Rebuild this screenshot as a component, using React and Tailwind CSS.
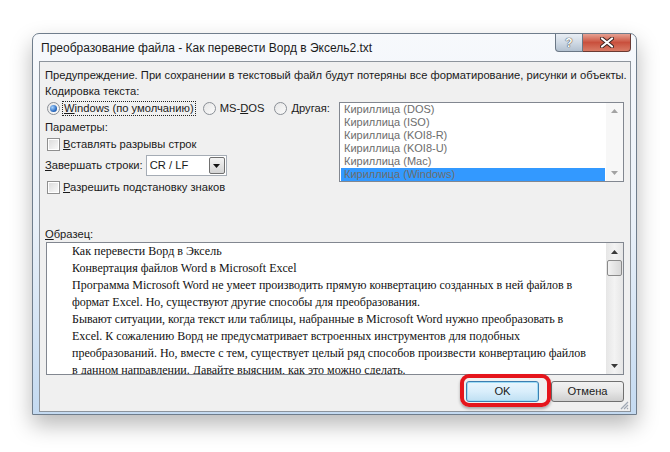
import React from "react";

const ui = "font-['Liberation_Sans',Arial,sans-serif]";

const Radio = ({ checked }) => (
	<span className="relative w-[13px] h-[13px] rounded-full border border-[#8a8f96] bg-linear-to-br from-[#e6e6e6] to-[#fbfbfb] flex items-center justify-center shrink-0">
		{checked && (
			<span className="w-[7px] h-[7px] rounded-full bg-[radial-gradient(circle_at_35%_35%,#a8d4ff,#1d5fb8_70%,#0c3f86)]"></span>
		)}
	</span>
);

const Checkbox = () => (
	<span className="w-[13px] h-[13px] border border-[#8f8f8f] bg-white flex items-center justify-center shrink-0">
		<span className="w-[9px] h-[9px] bg-linear-to-br from-[#dcdcdc] to-[#f8f8f8]"></span>
	</span>
);

const Arrow = ({ up, color = "#4d4d4d" }) => (
	<svg width="7" height="4" viewBox="0 0 7 4">
		{up ? (
			<polygon points="0,4 7,4 3.5,0" fill={color} />
		) : (
			<polygon points="0,0 7,0 3.5,4" fill={color} />
		)}
	</svg>
);

const encodings = [
	"Кириллица (DOS)",
	"Кириллица (ISO)",
	"Кириллица (KOI8-R)",
	"Кириллица (KOI8-U)",
	"Кириллица (Mac)",
	"Кириллица (Windows)",
];

const sample = [
	"Как перевести Ворд в Эксель",
	"Конвертация файлов Word в Microsoft Excel",
	"Программа Microsoft Word не умеет производить прямую конвертацию созданных в ней файлов в",
	"формат Excel. Но, существуют другие способы для преобразования.",
	"Бывают ситуации, когда текст или таблицы, набранные в Microsoft Word нужно преобразовать в",
	"Excel. К сожалению Ворд не предусматривает встроенных инструментов для подобных",
	"преобразований. Но, вместе с тем, существует целый ряд способов произвести конвертацию файлов",
	"в данном направлении. Давайте выясним, как это можно сделать.",
];

export default function App() {
	return (
		<div className={`w-[670px] h-[452px] bg-white pl-[32px] pt-[33px] ${ui}`}>
			<div className="w-[605px] h-[382px] rounded-t-[7px] border border-[#6f7d8c] bg-linear-to-b from-[#f7f9fc] via-[#e9f0f8] to-[#c4daf1] shadow-[0_10px_22px_rgba(0,0,0,0.28)] flex flex-col">
				{/* Заголовок */}
				<div className="h-[27px] flex items-start">
					<span className="pl-[8px] pt-[6px] text-[12px] text-[#1b1b1b] leading-[16px] whitespace-nowrap">
						Преобразование файла - Как перевести Ворд в Эксель2.txt
					</span>
					<div className="ml-auto mr-[5px] flex">
						<div className="w-[28px] h-[18px] rounded-bl-[4px] border border-t-0 border-[#6a7785] bg-linear-to-b from-[#e9eef4] via-[#d0dae5] to-[#b3c1d0] flex items-center justify-center">
							<span className="text-[12px] font-bold text-white leading-none [text-shadow:0_0_1px_#333,0_0_1px_#333]">?</span>
						</div>
						<div className="w-[48px] h-[18px] rounded-br-[4px] border border-t-0 border-l-0 border-[#6a3a33] bg-linear-to-b from-[#e6a193] via-[#c9503d] to-[#d87a65] flex items-center justify-center">
							<svg width="14" height="11" viewBox="0 0 14 11">
								<path d="M2 1.5 L12 9.5 M12 1.5 L2 9.5" stroke="#3b2320" strokeWidth="4" strokeLinecap="round" />
								<path d="M2 1.5 L12 9.5 M12 1.5 L2 9.5" stroke="#ffffff" strokeWidth="2.2" strokeLinecap="round" />
							</svg>
						</div>
					</div>
				</div>

				{/* Клиентская область */}
				<div className="ml-[6px] mr-[5px] h-[351px] border border-[#8d949c] bg-[#f0f0f0] flex flex-col pl-[5px] pt-[5px] text-[11.2px] text-[#1a1a1a] relative">
					<div className="h-[16px] leading-[16px] whitespace-nowrap">
						Предупреждение. При сохранении в текстовый файл будут потеряны все форматирование, рисунки и объекты.
					</div>
					<div className="h-[16px] leading-[16px]">Кодировка текста:</div>

					<div className="flex mt-[1px]">
						<div className="w-[290px] shrink-0 flex flex-col whitespace-nowrap">
							<div className="h-[16px] flex items-center">
								<span className="ml-[2px]"><Radio checked /></span>
								<span className="ml-[2px] px-[1px] border border-dotted border-[#222] leading-[13px]">
									<u>W</u>indows (по умолчанию)
								</span>
								<span className="ml-[7px]"><Radio /></span>
								<span className="ml-[4px]">MS-<u>D</u>OS</span>
								<span className="ml-[10px]"><Radio /></span>
								<span className="ml-[4px]"><u>Д</u>ругая:</span>
							</div>
							<div className="h-[16px] leading-[16px] mt-[3px]">Параметры:</div>
							<div className="h-[16px] flex items-center mt-[1px]">
								<span className="ml-[2px]"><Checkbox /></span>
								<span className="ml-[3px]"><u>В</u>ставлять разрывы строк</span>
							</div>
							<div className="h-[21px] flex items-center mt-[3px]">
								<span><u>З</u>авершать строки:</span>
								<div className="ml-[3px] w-[81px] h-[21px] border border-[#a5acb5] bg-white flex items-center">
									<span className="pl-[3px]">CR / LF</span>
									<div className="ml-auto mr-[1px] w-[16px] h-[17px] border border-[#707070] rounded-[2px] bg-linear-to-b from-[#f3f3f3] to-[#d4d4d4] flex items-center justify-center">
										<Arrow color="#111" />
									</div>
								</div>
							</div>
							<div className="h-[16px] flex items-center mt-[3px]">
								<span className="ml-[2px]"><Checkbox /></span>
								<span className="ml-[3px]"><u>Р</u>азрешить подстановку знаков</span>
							</div>
						</div>

						<div className="ml-auto mr-[6px] mt-[2px] w-[285px] h-[80px] border border-[#828790] bg-white flex">
							<div className="flex-1 flex flex-col pl-[1px] pr-[1px] text-[11px]">
								{encodings.map((e, i) => (
									<div
										key={e}
										className={`h-[13px] leading-[13px] pl-[3px] text-[#6d6d6d] whitespace-nowrap ${
											i === encodings.length - 1 ? "bg-[#3399ff]" : ""
										}`}
									>
										{e}
									</div>
								))}
							</div>
							<div className="w-[17px] bg-[#f7f7f7] flex flex-col items-center justify-between py-[6px]">
								<Arrow up color="#a3a3a3" />
								<Arrow color="#a3a3a3" />
							</div>
						</div>
					</div>

					<div className="mt-[31px] h-[16px] leading-[16px]">
						<u>О</u>бразец:
					</div>
					<div className="mr-[6px] ml-[1px] h-[133px] border border-[#828790] bg-white flex">
						<div className="flex-1 overflow-hidden pl-[25px] font-['Liberation_Serif','Times_New_Roman',serif] text-[12px] text-[#111]">
							{sample.map((line) => (
								<div key={line} className="h-[17px] leading-[17px] whitespace-nowrap">
									{line}
								</div>
							))}
						</div>
						<div className="w-[17px] bg-linear-to-r from-[#e6e6e6] via-[#f3f3f3] to-[#e6e6e6] flex flex-col items-center">
							<div className="h-[17px] flex items-center"><Arrow up color="#3a3a3a" /></div>
							<div className="w-[15px] h-[16px] rounded-[2px] border border-[#8a8a8a] bg-linear-to-r from-[#f2f2f2] to-[#d8d8d8]"></div>
							<div className="flex-1"></div>
							<div className="h-[17px] flex items-center"><Arrow color="#3a3a3a" /></div>
						</div>
					</div>

					<div className="mt-[6px] mr-[6px] flex justify-end gap-[12px]">
						<div className="relative">
							<div className="w-[73px] h-[21px] rounded-[3px] border border-[#3c7fb1] bg-linear-to-b from-[#eaf6fd] via-[#d9eefb] to-[#bfe0f3] shadow-[inset_0_0_0_1px_#9fdcf6] flex items-center justify-center">
								OK
							</div>
							<div className="absolute left-[-6px] top-[-7px] w-[91px] h-[33px] rounded-[9px] border-[4px] border-[#e5151c] shadow-[0_2px_3px_rgba(0,0,0,0.3)]"></div>
						</div>
						<div className="w-[73px] h-[21px] rounded-[3px] border border-[#707070] bg-linear-to-b from-[#f2f2f2] via-[#e6e6e6] to-[#cfcfcf] flex items-center justify-center">
							Отмена
						</div>
					</div>

					<svg className="absolute right-[1px] bottom-[1px]" width="10" height="10" viewBox="0 0 10 10">
						<path d="M9 2 L2 9 M9 5 L5 9 M9 8 L8 9" stroke="#a0a8b4" strokeWidth="1.2" />
					</svg>
				</div>
			</div>
		</div>
	);
}
